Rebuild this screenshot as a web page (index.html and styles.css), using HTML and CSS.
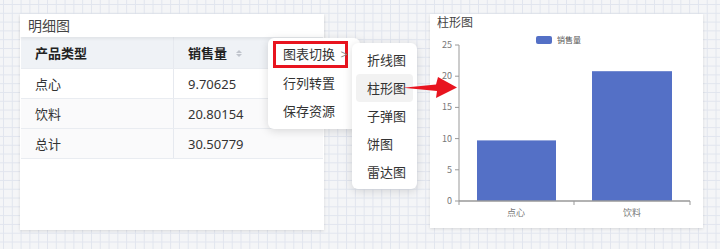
FILE: index.html
```html
<!DOCTYPE html>
<html lang="zh-CN">
<head>
    <meta charset="UTF-8">
    <meta name="viewport" content="width=device-width, initial-scale=1.0">
    <title>图表切换</title>
    <link rel="stylesheet" href="styles.css">
</head>
<body>
    <div class="board">
        <div class="panel detail">
            <div class="panel-title">明细图</div>
            <table class="grid">
                <thead>
                    <tr>
                        <th class="col-type">产品类型</th>
                        <th>销售量 <span class="sort"><i class="up"></i><i class="down"></i></span></th>
                    </tr>
                </thead>
                <tbody>
                    <tr><td>点心</td><td>9.70625</td></tr>
                    <tr class="alt"><td>饮料</td><td>20.80154</td></tr>
                    <tr class="alt"><td>总计</td><td>30.50779</td></tr>
                </tbody>
            </table>
        </div>

        <div class="panel chart">
            <div class="panel-title">柱形图</div>
            <svg class="bar-chart" width="273" height="196" viewBox="0 0 273 196">
                <!-- legend -->
                <rect x="106" y="4" width="16" height="8" rx="2" fill="#5470c6"/>
                <text x="127" y="11" class="legend">销售量</text>
                <!-- y axis -->
                <line x1="29" y1="13" x2="29" y2="169" stroke="#999" stroke-width="1"/>
                <g class="ticks" stroke="#999">
                    <line x1="25" y1="13" x2="29" y2="13"/>
                    <line x1="25" y1="44.2" x2="29" y2="44.2"/>
                    <line x1="25" y1="75.4" x2="29" y2="75.4"/>
                    <line x1="25" y1="106.6" x2="29" y2="106.6"/>
                    <line x1="25" y1="137.8" x2="29" y2="137.8"/>
                    <line x1="25" y1="169" x2="29" y2="169"/>
                </g>
                <g class="ylabels">
                    <text x="22" y="16">25</text>
                    <text x="22" y="47.2">20</text>
                    <text x="22" y="78.4">15</text>
                    <text x="22" y="109.6">10</text>
                    <text x="22" y="140.8">5</text>
                    <text x="22" y="172">0</text>
                </g>
                <!-- bars -->
                <rect x="47" y="108.4" width="79" height="60.6" fill="#5470c6"/>
                <rect x="162" y="39.2" width="80" height="129.8" fill="#5470c6"/>
                <!-- x axis -->
                <line x1="29" y1="169" x2="260" y2="169" stroke="#999" stroke-width="1.5"/>
                <g stroke="#999">
                    <line x1="29" y1="169" x2="29" y2="173"/>
                    <line x1="144" y1="169" x2="144" y2="173"/>
                    <line x1="260" y1="169" x2="260" y2="173"/>
                </g>
                <text x="86" y="184" class="xlabel">点心</text>
                <text x="202" y="184" class="xlabel">饮料</text>
            </svg>
        </div>
    </div>

    <div class="menu">
        <div class="menu-item active">图表切换 <span class="chev">&gt;</span></div>
        <div class="menu-item">行列转置</div>
        <div class="menu-item">保存资源</div>
    </div>

    <div class="menu sub">
        <div class="menu-item">折线图</div>
        <div class="menu-item hover">柱形图</div>
        <div class="menu-item">子弹图</div>
        <div class="menu-item">饼图</div>
        <div class="menu-item">雷达图</div>
    </div>

    <svg class="arrow" width="60" height="30" viewBox="400 74 60 30">
        <polygon points="403,87.8 436,84.5 438,77 457,87.5 436,98 437,91" fill="#e8141f"/>
    </svg>
</body>
</html>
```

FILE: styles.css
```css
body {
    margin: 0;
    width: 720px;
    height: 249px;
    overflow: hidden;
    font-family: "Noto Sans", "Noto Sans CJK SC", sans-serif;
    color: #333;
    background-color: #f4f5f7;
    background-image:
        linear-gradient(to right, #e1e5ee 1px, transparent 1px),
        linear-gradient(to bottom, #e1e5ee 1px, transparent 1px);
    background-size: 8.8px 8.8px;
    background-position: 3px 4px;
}
.board {
    display: flex;
    align-items: flex-start;
    gap: 106px;
    padding: 14px 0 0 20px;
}
.panel {
    background: #fff;
    box-shadow: 0 1px 3px rgba(0, 0, 0, 0.12);
}
.detail {
    width: 304px;
    height: 216px;
}
.detail .panel-title {
    height: 23px;
    line-height: 23px;
    padding-left: 8px;
    font-size: 14px;
    color: #444;
    box-shadow: 0 2px 3px rgba(0, 0, 0, 0.06);
    position: relative;
}
.grid {
    width: 302px;
    margin: 0 1px;
    border-collapse: collapse;
    font-size: 13px;
    table-layout: fixed;
}
.grid th, .grid td {
    text-align: left;
    padding: 0 14px;
    border-right: 1px solid #e6e9ef;
    border-bottom: 1px solid #e9ecf1;
}
.grid th:last-child, .grid td:last-child {
    border-right: none;
}
.grid th {
    height: 31px;
    background: #eff2f6;
    font-weight: 700;
    color: #222;
}
.grid .col-type {
    width: 124px;
}
.grid td {
    height: 29px;
    color: #333;
}
.grid .alt td {
    background: #fafafb;
}
.sort {
    display: inline-flex;
    flex-direction: column;
    gap: 1px;
    margin-left: 6px;
    vertical-align: middle;
    position: relative;
    top: -1px;
}
.sort i {
    display: block;
    width: 0;
    height: 0;
    border-left: 3px solid transparent;
    border-right: 3px solid transparent;
}
.sort .up {
    border-bottom: 3px solid #c0c4cc;
}
.sort .down {
    border-top: 3px solid #c0c4cc;
}
.chart {
    width: 273px;
    height: 214px;
}
.chart .panel-title {
    height: 18px;
    line-height: 18px;
    padding-left: 7px;
    font-size: 12px;
    color: #444;
}
.bar-chart {
    display: block;
    font-family: "Noto Sans CJK SC", sans-serif;
}
.legend {
    font-size: 8px;
    fill: #555;
}
.ylabels text {
    font-size: 9px;
    fill: #777;
    text-anchor: end;
}
.xlabel {
    font-size: 9px;
    fill: #777;
    text-anchor: middle;
}
.menu {
    position: absolute;
    left: 268px;
    top: 38px;
    width: 92px;
    padding: 3px 0 4px 5px;
    box-sizing: border-box;
    background: #fff;
    border-radius: 6px;
    box-shadow: 0 2px 10px rgba(0, 0, 0, 0.14);
    font-size: 13px;
}
.menu-item {
    height: 28px;
    line-height: 28px;
    padding-left: 10px;
    color: #333;
    white-space: nowrap;
}
.menu-item.active {
    width: 75px;
    box-sizing: border-box;
    height: 27px;
    line-height: 21px;
    padding-left: 7px;
    border: 3px solid #e8141f;
    margin-bottom: 1px;
}
.chev {
    color: #888;
    margin-left: 2px;
}
.menu.sub {
    left: 352px;
    top: 43px;
    width: 65px;
    padding: 3px 4px;
}
.sub .menu-item {
    padding-left: 11px;
    border-radius: 4px;
}
.sub .menu-item.hover {
    background: #f2f2f2;
}
.arrow {
    position: absolute;
    left: 400px;
    top: 74px;
}
```
